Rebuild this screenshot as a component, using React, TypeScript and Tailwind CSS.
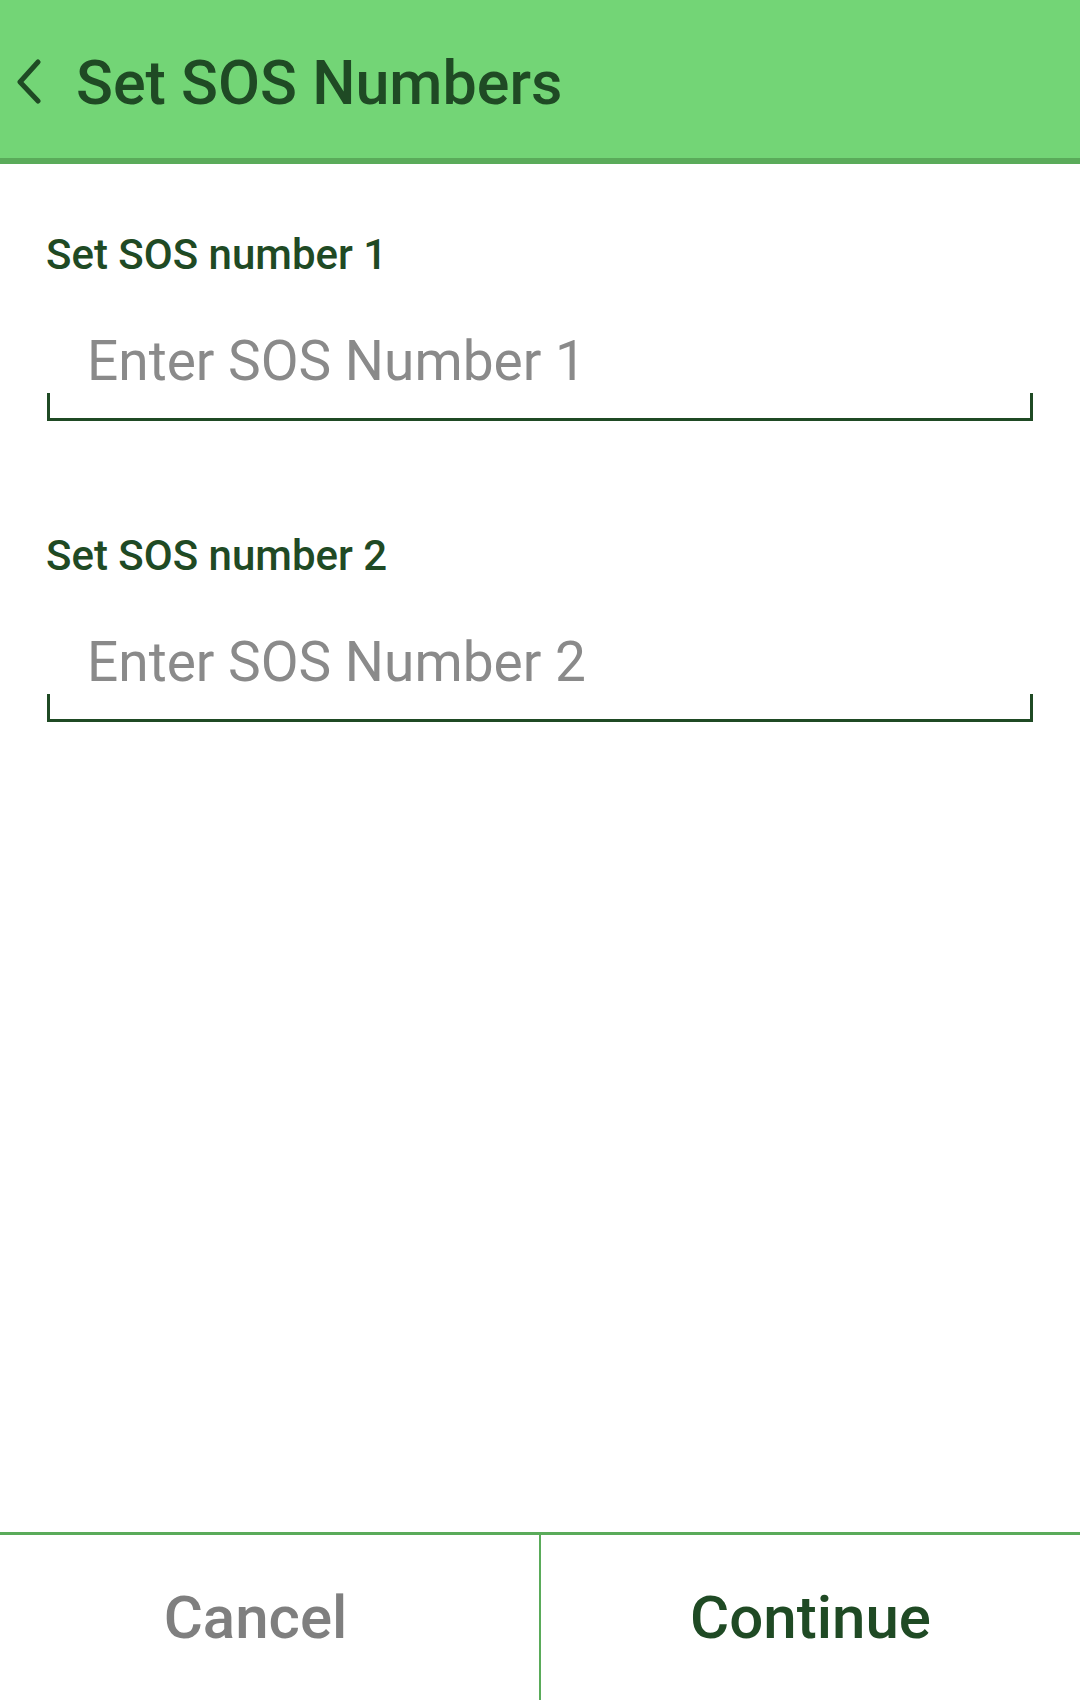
import { useState } from "react";

const dark = "#1F4A24";

function SosField({ label, placeholder }: { label: string; placeholder: string }) {
  const [value, setValue] = useState("");
  return (
    <div className="flex flex-col">
      <label className="pl-[46px] text-[42px] leading-none font-medium text-[#1F4A24]">{label}</label>
      <div className="mt-[57px] px-[47px]">
        <input
          value={value}
          onChange={(e) => setValue(e.target.value)}
          placeholder={placeholder}
          className="w-full h-[55px] leading-[55px] pl-[40px] bg-transparent outline-none text-[55px] text-[#1F4A24] placeholder:text-[#8A8A8A]"
          style={{ fontFamily: "Roboto, sans-serif" }}
        />
        <div className="mt-[5px] h-[28px] border-l-[3px] border-r-[3px] border-b-[3px] border-[#1F4A24]" />
      </div>
    </div>
  );
}

export default function App() {
  return (
    <div className="flex flex-col h-[1700px] w-[1080px] bg-white" style={{ fontFamily: "Roboto, sans-serif" }}>
      {/* Header */}
      <header className="h-[164px] bg-[#73D576] border-b-[6px] border-[#5AAB5A] flex items-start pl-[16px]">
        <svg width="26" height="46" viewBox="0 0 26 46" className="mt-[58px]" fill="none">
          <polyline points="22,4 4,24 22,43" stroke={dark} strokeWidth="5" strokeLinecap="round" strokeLinejoin="round" />
        </svg>
        <h1 className="ml-[34px] mt-[53px] text-[61px] leading-none font-medium text-[#1F4A24]">Set SOS Numbers</h1>
      </header>

      {/* Form */}
      <main className="flex-1 flex flex-col pt-[70px] gap-[114px]">
        <SosField label="Set SOS number 1" placeholder="Enter SOS Number 1" />
        <SosField label="Set SOS number 2" placeholder="Enter SOS Number 2" />
      </main>

      {/* Bottom actions */}
      <footer className="h-[168px] border-t-[3px] border-[#5AAB5A] flex">
        <button className="flex-1 flex items-center justify-center text-[60px] leading-none font-medium text-[#7F7F7F]">
          <span className="mr-[28px]">Cancel</span>
        </button>
        <div className="w-[2px] bg-[#5AAB5A]" />
        <button className="flex-1 flex items-center justify-center text-[60px] leading-none font-medium text-[#1F4A24]">
          Continue
        </button>
      </footer>
    </div>
  );
}
